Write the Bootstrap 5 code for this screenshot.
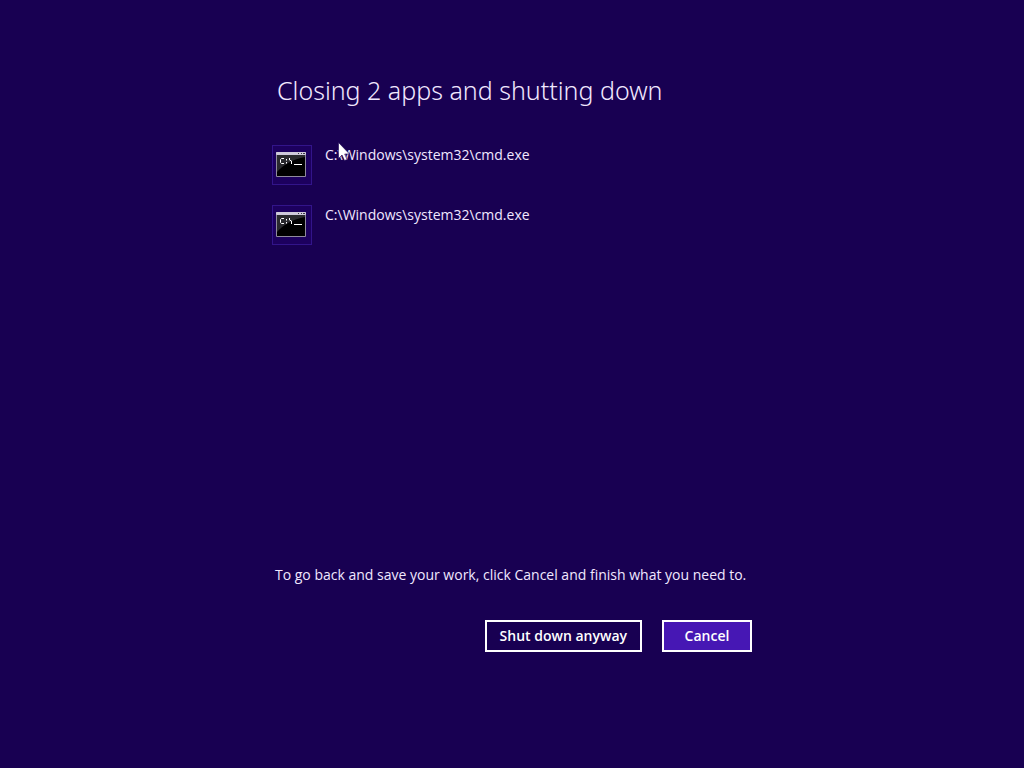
<!DOCTYPE html>
<html lang="en">
<head>
<meta charset="utf-8">
<meta name="viewport" content="width=device-width, initial-scale=1">
<title>Shutting down</title>
<link href="https://cdn.jsdelivr.net/npm/bootstrap@5.3.0/dist/css/bootstrap.min.css" rel="stylesheet">
<style>
  body { background: #180052; color: #f1e8ff; font-family: "Open Sans", "Noto Sans", sans-serif; font-size: 14px; line-height: 20px; }
  .shutdown-panel { max-width: 480px; padding: 72px 0 116px; }
  .shutdown-title { font-family: "Noto Sans", "Open Sans", sans-serif; font-size: 25px; line-height: 36px; font-weight: 300; padding-left: 5px; margin-bottom: 37px; }
  .app-list { gap: 20px; }
  .app-row { gap: 13px; }
  .app-icon { width: 40px; height: 40px; border: 1px solid #32148a; background: #1c005e; }
  .app-name { position: relative; }
  .pointer { position: absolute; left: 13px; top: -3px; }
  .hint { padding-left: 3px; margin-bottom: 35px; }
  .actions { gap: 20px; }
  .btn-shell { --bs-btn-color: #fff; --bs-btn-border-color: #fff; --bs-btn-border-width: 2px; --bs-btn-border-radius: 0; --bs-btn-padding-x: 13px; --bs-btn-padding-y: 4px; --bs-btn-font-size: 14px; --bs-btn-font-weight: 600; --bs-btn-line-height: 20px; --bs-btn-hover-color: #fff; --bs-btn-hover-border-color: #fff; --bs-btn-hover-bg: #2b0a78; height: 32px; min-width: 90px; }
  .btn-accent { --bs-btn-bg: #4617b4; --bs-btn-hover-bg: #5a2bc8; }
</style>
</head>
<body>
<svg class="d-none" aria-hidden="true">
  <symbol id="console" viewBox="0 0 38 38">
    <rect x="3" y="6" width="30" height="25" rx="1" fill="#8f8a9c"/>
    <rect x="3" y="6" width="30" height="3" rx="1" fill="#cfcadb"/>
    <path d="M25 7h1v1h-1zM28 7h1v1h-1zM30 7h2v1h-2z" fill="#3a3644"/>
    <rect x="4" y="9" width="28" height="21" fill="#000"/>
    <path d="M4 9h28v2C20 13 10 19 4 26z" fill="#2a2a2e"/>
    <path d="M11 12.500H8.500L7.500 13.500V16.500L8.500 17.500H11M13.500 13v1.500M13.500 16v1.500M16.500 12v2l2 1v3M21 18.500h8" fill="none" stroke="#fff" stroke-width="1"/>
  </symbol>
</svg>
<main class="shutdown-panel container-fluid min-vh-100 d-flex flex-column">
  <h1 class="shutdown-title">Closing 2 apps and shutting down</h1>
  <ul class="app-list list-unstyled d-flex flex-column mb-auto">
    <li class="app-row d-flex align-items-start">
      <span class="app-icon d-flex flex-shrink-0"><svg width="38" height="38" aria-hidden="true"><use href="#console"/></svg></span>
      <span class="app-name">C:\Windows\system32\cmd.exe
        <svg class="pointer" width="12" height="19" viewBox="0 0 12 19" aria-hidden="true"><path d="M.5.500V16.500L4 13l2.500 5.500 2.500-1L6.700 12H11.500z" fill="#fff" stroke="#180052" stroke-width=".6"/></svg>
      </span>
    </li>
    <li class="app-row d-flex align-items-start">
      <span class="app-icon d-flex flex-shrink-0"><svg width="38" height="38" aria-hidden="true"><use href="#console"/></svg></span>
      <span class="app-name">C:\Windows\system32\cmd.exe</span>
    </li>
  </ul>
  <p class="hint">To go back and save your work, click Cancel and finish what you need to.</p>
  <div class="actions d-flex justify-content-end">
    <button type="button" class="btn btn-shell">Shut down anyway</button>
    <button type="button" class="btn btn-shell btn-accent">Cancel</button>
  </div>
</main>
<script src="https://cdn.jsdelivr.net/npm/bootstrap@5.3.0/dist/js/bootstrap.bundle.min.js"></script>
</body>
</html>
